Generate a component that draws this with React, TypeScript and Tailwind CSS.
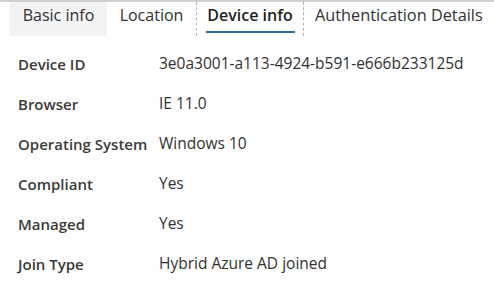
const rows = [
  { label: "Device ID", value: "3e0a3001-a113-4924-b591-e666b233125d" },
  { label: "Browser", value: "IE 11.0" },
  { label: "Operating System", value: "Windows 10" },
  { label: "Compliant", value: "Yes" },
  { label: "Managed", value: "Yes" },
  { label: "Join Type", value: "Hybrid Azure AD joined" },
];

export default function App() {
  return (
    <div className="h-[292px] w-[494px] overflow-hidden bg-white font-['Open_Sans',sans-serif] text-[#323130]">
      <div className="h-[2px] bg-[#cfcfcf]" />
      <div className="flex h-[34px] items-stretch pl-[10px]">
        <div className="flex w-[97px] items-start justify-center bg-[#f3f3f3] pt-[1px] text-[16px]">
          Basic info
        </div>
        <div className="flex w-[89px] items-start justify-center pt-[1px] text-[16px]">
          Location
        </div>
        <div className="relative flex w-[108px] items-start justify-center border-x border-dashed border-[#a9b6c0] pt-[1px] text-[16px] font-semibold text-[#201f1e]">
          Device info
          <span className="absolute bottom-[3px] left-[9px] h-[2px] w-[89px] bg-[#2a6f9e]" />
        </div>
        <div className="flex items-start pl-[11px] pt-[1px] text-[16.3px]">
          Authentication Details
        </div>
      </div>
      <div className="flex flex-col pl-[18px] pt-[8px]">
        {rows.map((row) => (
          <div className="flex h-[40px] items-center" key={row.label}>
            <span className="w-[141px] text-[15px] font-semibold text-[#3b3a39]">{row.label}</span>
            <span className="text-[15.5px]">{row.value}</span>
          </div>
        ))}
      </div>
    </div>
  );
}
